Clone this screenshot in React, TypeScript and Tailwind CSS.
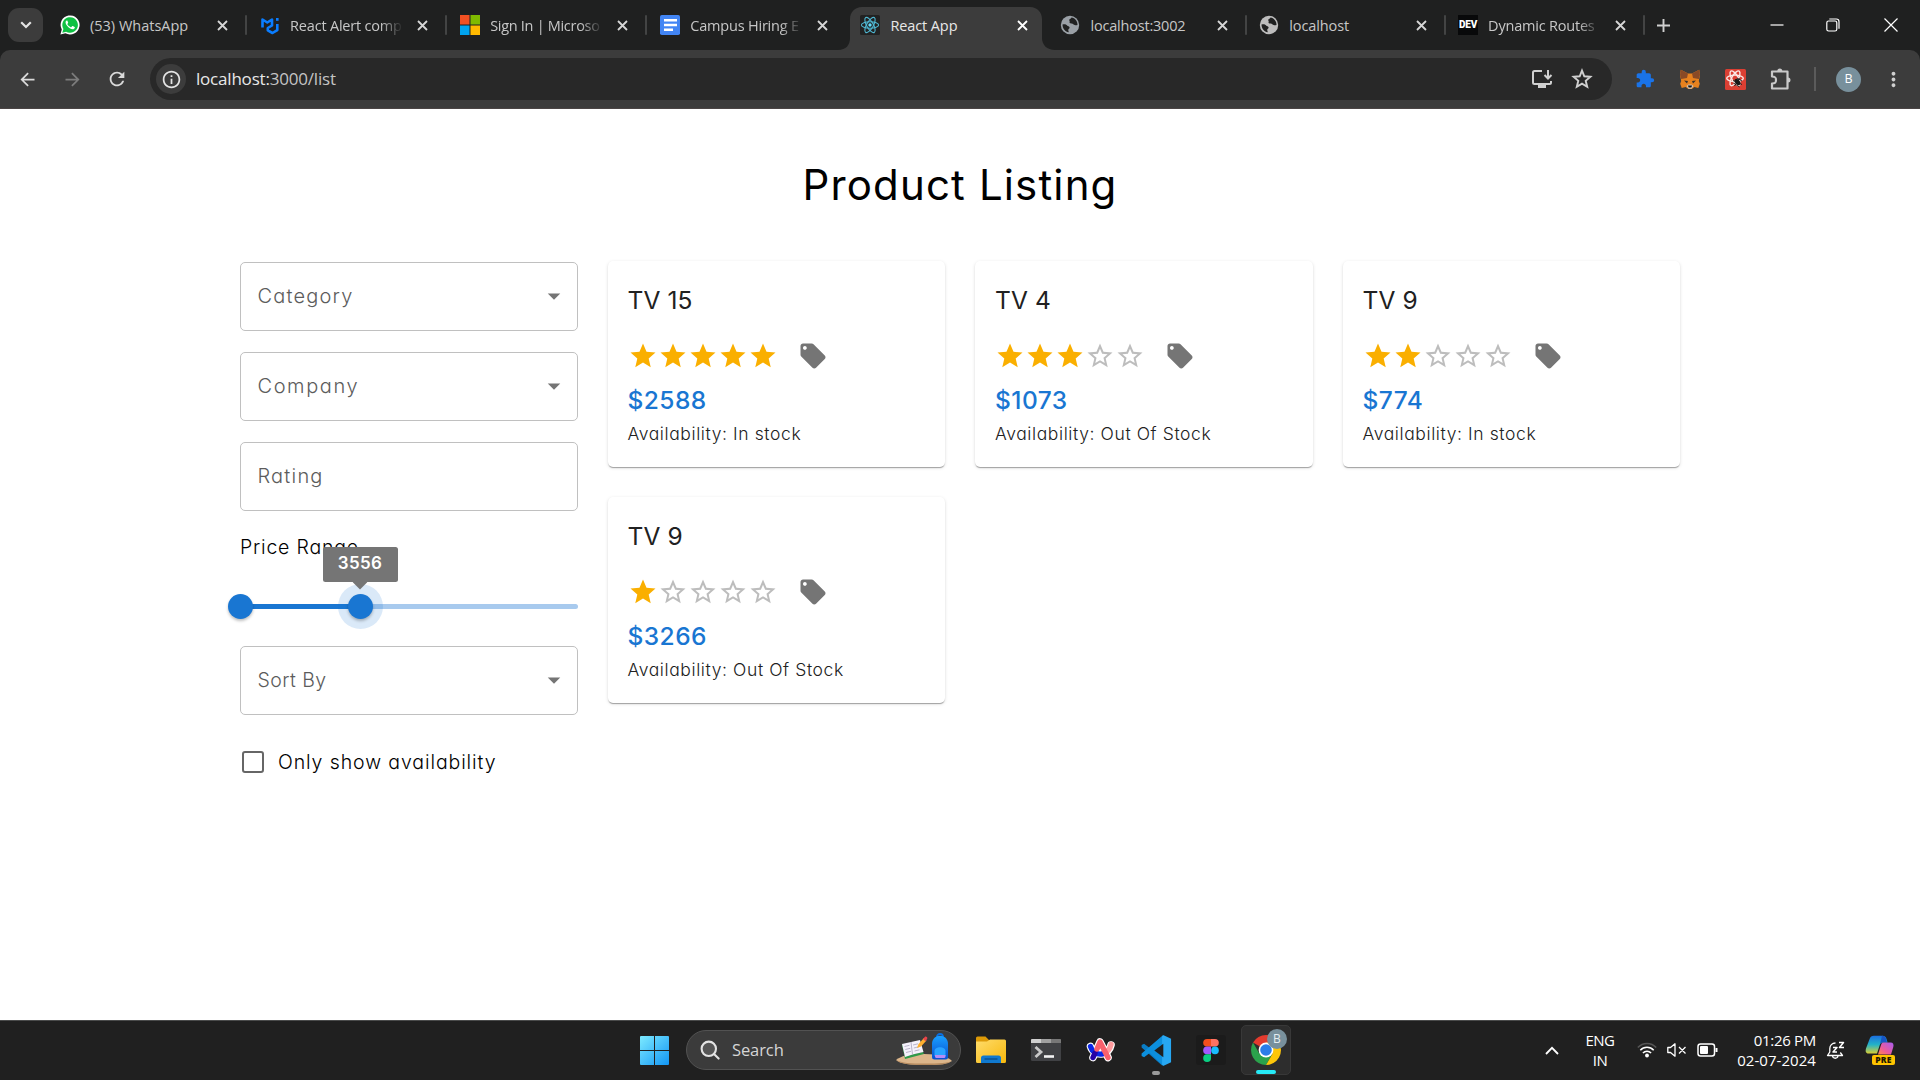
import type { ReactNode } from "react";
import {
  MdArrowBack,
  MdArrowDropDown,
  MdArrowForward,
  MdExtension,
  MdLocalOffer,
  MdMoreVert,
  MdOutlineInfo,
  MdRefresh,
  MdStar,
  MdStarBorder,
} from "react-icons/md";

/* ---------- favicons ---------- */

function WhatsAppIcon() {
  return (
    <svg width="20" height="20" viewBox="0 0 20 20">
      <path d="M.4 19.6 1.8 14.6A9.5 9.5 0 1 1 5.4 18.2Z" fill="#fff" />
      <path d="M2.3 17.7 3.4 14A7.8 7.8 0 1 1 6.1 16.7Z" fill="#0fc143" />
      <path
        d="M7 5.4c-.3 0-.9.2-1.200.9-.5 1.200-.2 2.600 1.300 4.500 1.700 2.100 3.700 3.500 5.600 3.500 1 0 2-.7 2.100-1.500.1-.5.1-.7-.2-.9l-1.800-.9c-.3-.1-.5 0-.7.2l-.7.9c-.2.200-.4.200-.7.1-1.500-.7-2.500-1.600-3.300-2.900-.1-.2-.1-.4.1-.6l.6-.8c.1-.2.1-.3 0-.5l-.8-1.800c-.1-.2-.2-.2-.3-.2Z"
        fill="#fff"
      />
    </svg>
  );
}

function MuiIcon() {
  return (
    <svg width="20" height="20" viewBox="0 0 20 20" fill="none" stroke="#0a7dff" strokeWidth="2.600" strokeLinejoin="round">
      <path d="M2.500 12.500V4.500L7.300 7.500 12 4.500v6l-4.200 2.500v2.300l4.700 2.700 4.800-2.900V9" />
      <path d="M17.300 3v2.800" />
    </svg>
  );
}

function MicrosoftIcon() {
  return (
    <svg width="20" height="20" viewBox="0 0 20 20">
      <rect width="9.500" height="9.500" fill="#f25022" />
      <rect x="10.500" width="9.500" height="9.500" fill="#7fba00" />
      <rect y="10.500" width="9.500" height="9.500" fill="#00a4ef" />
      <rect x="10.500" y="10.500" width="9.500" height="9.500" fill="#ffb900" />
    </svg>
  );
}

function DocsIcon() {
  return (
    <svg width="20" height="20" viewBox="0 0 20 20">
      <rect width="20" height="20" rx="1.800" fill="#4285f4" />
      <path d="M4 5.200h13M4 10h13M4 14.800h9" stroke="#fff" strokeWidth="2.400" />
    </svg>
  );
}

function ReactIcon() {
  return (
    <svg width="20" height="20" viewBox="0 0 20 20">
      <rect width="20" height="20" rx="1.500" fill="#222" />
      <g fill="none" stroke="#4fb8d3" strokeWidth="1.100">
        <ellipse cx="10" cy="10" rx="8.600" ry="3.300" />
        <ellipse cx="10" cy="10" rx="8.600" ry="3.300" transform="rotate(60 10 10)" />
        <ellipse cx="10" cy="10" rx="8.600" ry="3.300" transform="rotate(120 10 10)" />
      </g>
      <circle cx="10" cy="10" r="1.700" fill="#61dafb" />
    </svg>
  );
}

function GlobeIcon({ color }: { color: string }) {
  return (
    <svg width="20" height="20" viewBox="0 0 20 20">
      <circle cx="10" cy="10" r="9.200" fill={color} />
      <path
        d="M2.500 9.500c2.800-.6 4 .2 4.600 1.100.7 1 2.300.6 2.500 1.800.3 1.300-1.600 1.400-1.400 2.700l.6 2.200c-3.500-.6-6.200-3.600-6.300-7.800ZM11.500 2.600c-.3 1.500-1.900 1.300-2.300 2.200-.3.900.9 1.300.4 2.300-.4.800.6 1.500 1.700 1.400 1.500-.2 2 .7 2.700 1.300 1 .8 2.400.4 3.500.1.100-3.700-2.600-6.800-6-7.300Z"
        fill="#202121"
      />
    </svg>
  );
}

function DevIcon() {
  return (
    <div className="flex h-5 w-5 items-center justify-center bg-[#08090a] font-['Roboto',sans-serif] text-[10px] leading-none font-black tracking-[-0.2px] text-white">
      DEV
    </div>
  );
}

function CloseGlyph() {
  return (
    <svg width="11" height="11" viewBox="0 0 11 11" stroke="currentColor" strokeWidth="1.800">
      <path d="M1 1l9 9M10 1l-9 9" />
    </svg>
  );
}

/* ---------- browser chrome ---------- */

type Tab = { icon: ReactNode; label: string; fade?: boolean; active?: boolean; divider?: boolean; narrow?: boolean; text: string };

const tabs: Tab[] = [
  { icon: <WhatsAppIcon />, label: "(53) WhatsApp", divider: true, text: "tracking-[0px]" },
  { icon: <MuiIcon />, label: "React Alert comp", fade: true, divider: true, text: "tracking-[-0.200px]" },
  { icon: <MicrosoftIcon />, label: "Sign In | Microso", fade: true, divider: true, text: "tracking-[-0.300px]" },
  { icon: <DocsIcon />, label: "Campus Hiring E", fade: true, text: "tracking-[-0.200px]" },
  { icon: <ReactIcon />, label: "React App", active: true, text: "tracking-[-0.100px]" },
  { icon: <GlobeIcon color="#9aa0a6" />, label: "localhost:3002", divider: true, narrow: true, text: "tracking-[-0.200px]" },
  { icon: <GlobeIcon color="#bdbdbd" />, label: "localhost", divider: true, narrow: true, text: "tracking-[-0.100px]" },
  { icon: <DevIcon />, label: "Dynamic Routes", fade: true, divider: true, narrow: true, text: "tracking-[-0.200px]" },
];

function BrowserTab({ tab }: { tab: Tab }) {
  return (
    <div className={"relative h-[50px] shrink-0 " + (tab.narrow ? "w-[198.800px]" : "w-[200.100px]")}>
      {tab.active && (
        <svg className="absolute top-[7px] -left-3 text-[#3c3c3c]" width="217" height="43" viewBox="0 0 217 43" fill="currentColor">
          <path d="M0 43c8 0 12-5 12-12V12C12 5 17 0 24 0h168c7 0 12 5 12 12v19c0 7 5 12 13 12Z" />
        </svg>
      )}
      <div className="relative flex h-full items-center pl-2.5">
        <div className="flex h-5 w-5 shrink-0 items-center justify-center">{tab.icon}</div>
        <div
          className={
            "mt-px ml-2.5 w-[113px] text-[14.500px] whitespace-nowrap " +
            tab.text +
            (tab.active ? " text-[#e8e8e8] " : " text-[#c7c7c7] ") +
            (tab.fade ? "[mask-image:linear-gradient(to_right,black_80%,transparent_100%)]" : "")
          }
        >
          {tab.label}
        </div>
        <div className={"ml-[13.500px] flex items-center " + (tab.active ? "text-white" : "text-[#d6d6d6]")}>
          <CloseGlyph />
        </div>
        {tab.divider && <div className="ml-[17px] h-5 w-[2px] rounded-full bg-[#434444]" />}
      </div>
    </div>
  );
}

function TabStrip() {
  return (
    <div className="flex h-[50px] items-center bg-[#1f2020]">
      <div className="ml-2 flex h-[34px] w-[35px] shrink-0 items-center justify-center rounded-[11px] bg-[#3c3c3c]">
        <svg width="12" height="8" viewBox="0 0 12 8" fill="none" stroke="#e3e3e3" strokeWidth="2.200">
          <path d="M1.200 1.200 6 6l4.800-4.800" />
        </svg>
      </div>
      <div className="ml-[7px] flex">
        {tabs.map((tab) => (
          <BrowserTab key={tab.label} tab={tab} />
        ))}
      </div>
      <svg className="ml-[10px] shrink-0" width="13" height="13" viewBox="0 0 13 13" stroke="#d0d0d0" strokeWidth="1.900">
        <path d="M6.500 0v13M0 6.500h13" />
      </svg>
      <div className="ml-auto flex items-center text-white">
        <svg width="14" height="14" viewBox="0 0 14 14" stroke="currentColor" strokeWidth="1.200">
          <path d="M.5 7h13" />
        </svg>
        <svg className="ml-[42px]" width="14" height="14" viewBox="0 0 14 14" fill="none" stroke="currentColor" strokeWidth="1.200">
          <rect x=".8" y="3" width="10" height="10" rx="1.800" />
          <path d="M3.300 1h7a2.700 2.700 0 0 1 2.700 2.700v7" />
        </svg>
        <svg className="mr-[22px] ml-[44px]" width="14" height="14" viewBox="0 0 14 14" stroke="currentColor" strokeWidth="1.200">
          <path d="M.5.5l13 13M13.500.5l-13 13" />
        </svg>
      </div>
    </div>
  );
}

function FoxIcon() {
  return (
    <svg width="20" height="20" viewBox="0 0 20 20">
      <path d="M.8.8 8 4.500h4L19.200.8 20 6l-1.200 6 1 2.800-1.500 4.200-4-1-2.500 2H8.200l-2.500-2-4 1L.2 14.800l1-2.800L0 6Z" fill="#e8821e" />
      <path d="M.8.8 8 4.500 7 9l-5.800 1L0 6ZM19.200.8 12 4.500l1 4.500 5.800 1L20 6Z" fill="#8a4a26" />
      <path d="M4 11.500l4 .5-1 2.500ZM16 11.500l-4 .5 1 2.500Z" fill="#3b3029" />
      <path d="M6.500 17l2-1.500h3l2 1.500-2 2.800h-3Z" fill="#cfc4ba" />
      <path d="M8 16.500h4l-.6 2H8.600Z" fill="#161616" />
    </svg>
  );
}

function ReactDevIcon() {
  return (
    <svg width="21" height="21" viewBox="0 0 21 21">
      <rect width="21" height="21" rx="1.500" fill="#db3f33" />
      <g fill="none" stroke="#fbe7e5" strokeWidth="1.400">
        <ellipse cx="10" cy="9.300" rx="8.300" ry="3.200" />
        <ellipse cx="10" cy="9.300" rx="8.300" ry="3.200" transform="rotate(60 10 9.300)" />
        <ellipse cx="10" cy="9.300" rx="8.300" ry="3.200" transform="rotate(120 10 9.300)" />
      </g>
      <ellipse cx="12.500" cy="13" rx="2.300" ry="3.600" transform="rotate(-40 12.500 13)" fill="#171717" />
      <path d="M8 11.500l9 4M9.500 17l5-8M8.500 14l6 4M12 9l5 3" stroke="#171717" strokeWidth=".9" />
    </svg>
  );
}

function ExtensionsIcon() {
  return (
    <svg width="22" height="24" viewBox="0 0 22 24" fill="none" stroke="#c9c9c9" strokeWidth="2.200" strokeLinejoin="round">
      <path d="M2 4.500h15.500v17H2v-5c3.500 0 4-1 4-3.500S5.500 9.500 2 9.500Z" />
      <path d="M7.300 4a2.500 2.500 0 0 1 5 0ZM18 10.500a2.500 2.500 0 0 1 0 5Z" fill="#c9c9c9" stroke="none" />
    </svg>
  );
}

function Toolbar() {
  return (
    <div className="bg-[#1f2020]">
      <div className="flex h-[59px] items-center rounded-t-[10px] border-b border-[#4b4545] bg-[#3c3c3c]">
        <MdArrowBack className="ml-[17px] text-[#dadada]" size={21} />
        <MdArrowForward className="ml-6 text-[#7c7c7c]" size={21} />
        <MdRefresh className="ml-[23px] text-[#dadada]" size={22} />
        <div className="ml-[22px] flex h-[42px] w-[1462px] items-center rounded-full bg-[#282828] pl-[6px]">
          <div className="flex h-[30px] w-[30px] items-center justify-center rounded-full bg-[#3c3c3c] text-[#e3e3e3]">
            <MdOutlineInfo size={21} />
          </div>
          <div className="ml-[10px] text-[17px] tracking-[-0.200px] text-[#e8e8e8]">
            localhost:<span className="text-[#c4c4c4]">3000/list</span>
          </div>
          <div className="ml-auto flex items-center gap-[18px] pr-[19px] text-[#d0d0d0]">
            <svg width="22" height="20" viewBox="0 0 22 20" fill="none" stroke="currentColor" strokeWidth="2">
              <path d="M11 2H3.500A1.500 1.500 0 0 0 2 3.500v10A1.500 1.500 0 0 0 3.500 15h15a1.500 1.500 0 0 0 1.500-1.500V12M17 1v8M13.500 6l3.500 3.500L20.500 6" />
              <path d="M7 17.500h8" strokeWidth="3" />
            </svg>
            <svg width="22" height="22" viewBox="0 0 22 22" fill="none" stroke="currentColor" strokeWidth="1.900">
              <path d="m11 2.600 2.300 5.700 6.100.5-4.700 4 1.500 6L11 15.600 5.800 18.800l1.500-6-4.700-4 6.100-.5Z" />
            </svg>
          </div>
        </div>
        <MdExtension className="ml-[23px] text-[#1a73e8]" size={20} />
        <div className="ml-[25px]">
          <FoxIcon />
        </div>
        <div className="ml-[25px]">
          <ReactDevIcon />
        </div>
        <div className="ml-[24px]">
          <ExtensionsIcon />
        </div>
        <div className="ml-[22px] h-6 w-[2px] bg-[#5b5b5b]" />
        <div className="ml-5 flex h-[25px] w-[25px] items-center justify-center rounded-full bg-[#78909c] text-[12.500px] text-white">B</div>
        <MdMoreVert className="ml-[21px] text-[#d0d0d0]" size={23} />
      </div>
    </div>
  );
}

/* ---------- page ---------- */

function SelectField({ label, arrow = true, text }: { label: string; arrow?: boolean; text: string }) {
  return (
    <div className="flex h-[69px] items-center justify-between rounded-[5px] border border-[#c0c0c0] pr-[7.500px] pl-[16.500px]">
      <span className={"-mt-[2px] leading-[30px] font-light text-[#5c5c5c] " + text}>{label}</span>
      {arrow && <MdArrowDropDown className="-mt-px text-[#757575]" size={30} />}
    </div>
  );
}

function PriceSlider() {
  return (
    <div className="relative mt-[25px] h-[39px]">
      <div className="absolute top-[17px] left-0 h-[5px] w-full rounded-full bg-[#a8caee]" />
      <div className="absolute top-[17px] left-0 h-[5px] w-[120px] bg-[#1976d2]" />
      <div className="absolute top-[7px] -left-[12.500px] h-[25px] w-[25px] rounded-full bg-[#1976d2] shadow-[0_2px_3px_rgba(0,0,0,0.25)]" />
      <div className="absolute -top-[3px] left-[97.500px] h-[45px] w-[45px] rounded-full bg-[#1976d2]/16" />
      <div className="absolute top-[7px] left-[107.500px] h-[25px] w-[25px] rounded-full bg-[#1976d2] shadow-[0_2px_3px_rgba(0,0,0,0.25)]" />
      <div className="absolute -top-[40px] left-[82.500px] flex h-[34.500px] w-[75px] items-center justify-center rounded-[2.500px] bg-[#757575] pb-px text-[17px] leading-none font-semibold tracking-[0.300px] text-white">
        3556
        <svg className="absolute top-full left-1/2 -translate-x-1/2" width="15" height="8" viewBox="0 0 15 8">
          <path d="M0 0h15L7.500 7.500Z" fill="#757575" />
        </svg>
      </div>
    </div>
  );
}

function Filters() {
  return (
    <div className="flex w-[337.500px] shrink-0 flex-col pt-px">
      <div className="flex flex-col gap-[21px]">
        <SelectField label="Category" text="text-[20px] tracking-[1.200px]" />
        <SelectField label="Company" text="text-[20px] tracking-[1.600px]" />
        <SelectField label="Rating" arrow={false} text="text-[20px] tracking-[1.200px]" />
      </div>
      <div className="mt-[21px] h-[30px] text-[19.500px] leading-[30px] font-[350] tracking-[0.800px] text-black">Price Range</div>
      <PriceSlider />
      <div className="mt-5">
        <SelectField label="Sort By" text="text-[19.500px] tracking-[0.450px]" />
      </div>
      <div className="mt-[32px] flex h-[30px] items-center">
        <div className="ml-[1.500px] h-[22.500px] w-[22.500px] rounded-[3px] border-[2.500px] border-[#666]" />
        <span className="ml-[14px] text-[19.500px] leading-[30px] font-[350] tracking-[0.900px] text-black">Only show availability</span>
      </div>
    </div>
  );
}

type Product = { name: string; rating: number; price: string; stock: string };

const products: Product[] = [
  { name: "TV 15", rating: 5, price: "$2588", stock: "In stock" },
  { name: "TV 4", rating: 3, price: "$1073", stock: "Out Of Stock" },
  { name: "TV 9", rating: 2, price: "$774", stock: "In stock" },
  { name: "TV 9", rating: 1, price: "$3266", stock: "Out Of Stock" },
];

function ProductCard({ product }: { product: Product }) {
  return (
    <div className="h-[206px] rounded-[5px] bg-white px-5 pt-5 shadow-[0_2px_1px_-1px_rgba(0,0,0,0.2),0_1px_1px_0_rgba(0,0,0,0.14),0_1px_3.750px_0_rgba(0,0,0,0.12)]">
      <div className="text-[24.500px] leading-[39px] tracking-[0.100px] text-[#212121]">{product.name}</div>
      <div className="mt-4 flex h-10 items-center">
        {[1, 2, 3, 4, 5].map((n) =>
          n <= product.rating ? (
            <MdStar key={n} size={30} className="text-[#faaf00]" />
          ) : (
            <MdStarBorder key={n} size={30} className="text-[#bdbdbd]" />
          ),
        )}
        <MdLocalOffer size={30} className="ml-5 text-[#757575]" />
      </div>
      <div className="mt-[9px] text-[24.500px] leading-[31px] font-medium tracking-[0.450px] text-[#1976d2]">{product.price}</div>
      <div className="mt-[4px] text-[17.500px] leading-[27px] font-light tracking-[0.600px] text-[#212121]">Availability: {product.stock}</div>
    </div>
  );
}

function ProductPage() {
  return (
    <main className="h-[911px] bg-white font-['Inter',sans-serif] [font-feature-settings:'cv11']">
      <h1 className="pt-[49px] text-center text-[42px] leading-[53px] font-[380] tracking-[1.150px] text-black">Product Listing</h1>
      <div className="mx-auto mt-[50px] flex w-[1440px] gap-[30px]">
        <Filters />
        <div className="grid flex-1 grid-cols-3 content-start gap-[30px]">
          {products.map((product, i) => (
            <ProductCard key={i} product={product} />
          ))}
        </div>
      </div>
    </main>
  );
}

/* ---------- taskbar ---------- */

function TaskCell({ children }: { children: ReactNode }) {
  return <div className="relative flex h-[50px] w-[55px] items-center justify-center">{children}</div>;
}

function WindowsIcon() {
  return (
    <svg width="29" height="29" viewBox="0 0 29 29">
      <defs>
        <linearGradient id="win" x1="0" y1="0" x2="29" y2="29" gradientUnits="userSpaceOnUse">
          <stop stopColor="#7deaff" />
          <stop offset="1" stopColor="#1296f5" />
        </linearGradient>
      </defs>
      <path d="M1 0h13v14H0V1a1 1 0 0 1 1-1ZM15 0h13a1 1 0 0 1 1 1v13H15ZM0 15h14v14H1a1 1 0 0 1-1-1ZM15 15h14v13a1 1 0 0 1-1 1H15Z" fill="url(#win)" />
    </svg>
  );
}

function SearchArt() {
  return (
    <svg width="58" height="34" viewBox="0 0 58 34">
      <defs>
        <linearGradient id="bag" x1="0" y1="0" x2="0" y2="1">
          <stop stopColor="#18a0ff" />
          <stop offset="1" stopColor="#0a4fd0" />
        </linearGradient>
      </defs>
      <path d="M1 27c5-4 12-6 28-6s24 3 28 7c-5 3-10 4-26 4S5 31 1 27Z" fill="#dcb68b" />
      <path d="M1 27c6 3 14 3.500 29 3.500S52 30 57 28c-5 3-10 4-26 4S5 31 1 27Z" fill="#b58a5e" />
      <path d="m7 12 3 14 19-5-1-2L10 23 8 11Z" fill="#2f9a4a" />
      <path d="m7 11 9-2 1.500 12.500L10 24ZM16 9l9-2 3.500 12-11 2.500Z" fill="#f4f1fb" />
      <path d="m16 9 1.500 12.500M9.500 13.500l5-1.200M10.300 16.500l5-1.200M11 19.500l5-1.200M18 12l5-1.200M18.800 15l5-1.200M19.500 18l5-1.200" stroke="#a9a3bd" strokeWidth=".8" />
      <path d="m22 15 1.500-4L29 5l2.500 2.500-5.500 6Z" fill="#ffb02e" />
      <path d="m28 6 2-2.300c1-.8 3 .8 2.200 2L30.500 8.300Z" fill="#e8434b" />
      <path d="M42 4c0-4 6-4 6 0" fill="none" stroke="#0a6fe0" strokeWidth="1.800" />
      <path d="M37 11c0-11 16-11 16 0v13a2.500 2.500 0 0 1-2.500 2.500h-11A2.500 2.500 0 0 1 37 24Z" fill="url(#bag)" />
      <path d="M39.500 18c0-5 11-5 11 0v5h-11Z" fill="#28a3ff" />
      <path d="M40 22h10.500v1.500c0 1-1 1.500-2 1.500H42c-1 0-2-.5-2-1.500Z" fill="#b58cf5" />
    </svg>
  );
}

function FolderIcon() {
  return (
    <svg width="30" height="28" viewBox="0 0 30 28">
      <defs>
        <linearGradient id="fold" x1="0" y1="0" x2="1" y2="1">
          <stop stopColor="#ffdc6b" />
          <stop offset="1" stopColor="#f7b80c" />
        </linearGradient>
      </defs>
      <path d="M0 2a1.500 1.500 0 0 1 1.500-1.500h8L13 4h12v6H0Z" fill="#dd9a07" />
      <path d="M0 5.500h11L14 3.500h14.500A1.500 1.500 0 0 1 30 5v20.500a1.500 1.500 0 0 1-1.500 1.500h-27A1.500 1.500 0 0 1 0 25.500Z" fill="url(#fold)" />
      <path d="M5 27v-5a2.500 2.500 0 0 1 2.500-2.500h15A2.500 2.500 0 0 1 25 22v5Z" fill="#1079cf" />
      <path d="M8.500 23h13" stroke="#0a4c88" strokeWidth="1.300" />
    </svg>
  );
}

function TerminalIcon() {
  return (
    <svg width="30" height="22" viewBox="0 0 30 22">
      <rect width="30" height="22" rx="1.200" fill="#404144" />
      <path d="M1 0h9v4H0V1a1 1 0 0 1 1-1Z" fill="#cfcfcf" />
      <path d="M10 0h10v4H10Z" fill="#a0a0a0" />
      <path d="M20 0h9a1 1 0 0 1 1 1v3H20Z" fill="#777" />
      <path d="m4.500 8 5.500 5-5.500 5" fill="none" stroke="#c8c8c8" strokeWidth="2.800" />
      <path d="M13 17.500h10" stroke="#f3f3f3" strokeWidth="2.600" />
    </svg>
  );
}

function ArcIcon() {
  return (
    <svg width="30" height="26" viewBox="0 0 30 26" fill="none" strokeLinecap="round" strokeLinejoin="round">
      <path d="M4.500 9.500c1.500 5 6 8 11 7.500s8.500-4 9.500-9M7 20.500 14 5l8 15.500" stroke="#fff" strokeWidth="7.600" />
      <path d="M25 7.500c-1 4.500-4 8-8.500 9.300" stroke="#ff9a9d" strokeWidth="5.400" />
      <path d="M4.500 9.500c1.500 5 6 8.500 12 7.300" stroke="#0a27e8" strokeWidth="5.400" />
      <path d="M9 16 7 20.500" stroke="#2702a6" strokeWidth="5.400" />
      <path d="M11 12 14 5l8 15.500" stroke="#f9606c" strokeWidth="5.400" />
    </svg>
  );
}

function VSCodeIcon() {
  return (
    <svg width="31" height="31" viewBox="0 0 100 100">
      <path d="M72 1 28 42 10 28 2 32v8l66 58Z" fill="#0a7cc4" />
      <path d="M72 99 28 58 10 72 2 68v-8L70 2Z" fill="#0c8fdd" />
      <path d="M73 1 97 12v76L73 99c-3 0-5-2-5-4V5c0-2 2-4 5-4Z" fill="#27a7f2" />
      <path d="M72 28v44L43 50Z" fill="#202020" />
    </svg>
  );
}

function FigmaIcon() {
  return (
    <div className="flex h-[30px] w-[30px] items-center justify-center rounded-[3px] bg-[#1b1b1b]">
      <svg width="16" height="23" viewBox="0 0 16 23">
        <path d="M4 0h4v7.600H4A3.800 3.800 0 0 1 4 0Z" fill="#f24e1e" />
        <path d="M8 0h4a3.800 3.800 0 0 1 0 7.600H8Z" fill="#ff7262" />
        <path d="M4 7.600h4v7.600H4a3.800 3.800 0 0 1 0-7.600Z" fill="#a259ff" />
        <circle cx="12" cy="11.400" r="3.800" fill="#1abcfe" />
        <path d="M4 15.200h4V19a3.900 3.900 0 1 1-4-3.800Z" fill="#0acf83" />
      </svg>
    </div>
  );
}

function ChromeIcon() {
  return (
    <svg width="30" height="30" viewBox="0 0 30 30">
      <path d="M15 15 2.010 7.500A15 15 0 0 1 27.990 7.500Z" fill="#e33b2e" />
      <path d="M2.010 7.500A15 15 0 0 0 15 30L21.500 18.700 15 15 8.500 18.700Z" fill="#2ba24c" />
      <path d="M27.990 7.500A15 15 0 0 1 15 30l6.500-11.200L15 7.500Z" fill="#fdc60a" />
      <circle cx="15" cy="15" r="7.400" fill="#fff" />
      <circle cx="15" cy="15" r="5.800" fill="#2b7de9" />
    </svg>
  );
}

function CopilotIcon() {
  return (
    <svg width="30" height="30" viewBox="0 0 30 30">
      <defs>
        <linearGradient id="cpa" x1="0" y1="0" x2="0" y2="1">
          <stop stopColor="#1b6fe0" />
          <stop offset=".5" stopColor="#23b3c8" />
          <stop offset="1" stopColor="#d9cf35" />
        </linearGradient>
        <linearGradient id="cpb" x1="1" y1="0" x2="0" y2="1">
          <stop stopColor="#a55cf3" />
          <stop offset=".6" stopColor="#ee5b9b" />
          <stop offset="1" stopColor="#ff8a4a" />
        </linearGradient>
      </defs>
      <path d="M9 .8h8.500c2.500 0 3.500 1.400 4.200 3.600l.9 3H18c-2 0-2.800 1-3.400 3L12 18.500H3.500C.6 18.500.3 16 1 13.500L4.600 4C5.400 1.800 6.500.8 9 .8Z" fill="url(#cpa)" />
      <path d="M17 .8c2.500 0 3.500 1.400 4.200 3.600l.9 3H18c-1.500 0-2.500.6-3 1.600Z" fill="#1756c4" />
      <path d="M18.500 7.500h7c2.700 0 3.500 2 2.800 4.500L26 19.500H13l3-9.500c.5-1.700 1-2.500 2.500-2.500Z" fill="url(#cpb)" />
    </svg>
  );
}

function Taskbar() {
  return (
    <footer className="flex h-[60px] items-center border-t border-[#4a4b4b] bg-[#202020] pb-px text-white">
      <div className="ml-[627px] flex items-center">
        <TaskCell>
          <WindowsIcon />
        </TaskCell>
        <div className="mr-[2.500px] ml-1 flex h-10 w-[275px] items-center rounded-full border border-[#525252] bg-[#3b3b3b] pr-[7px] pl-[13px]">
          <svg width="20" height="20" viewBox="0 0 20 20" fill="none" stroke="#e3e3e3" strokeWidth="2.100" strokeLinecap="round">
            <circle cx="8.800" cy="8.800" r="7.200" fill="#555" />
            <path d="m14 14 4.600 4.600" />
          </svg>
          <span className="ml-[12px] text-[16.500px] tracking-[-0.100px] text-[#d5d5d5]">Search</span>
          <div className="ml-auto">
            <SearchArt />
          </div>
        </div>
        <TaskCell>
          <FolderIcon />
        </TaskCell>
        <TaskCell>
          <TerminalIcon />
        </TaskCell>
        <TaskCell>
          <ArcIcon />
        </TaskCell>
        <TaskCell>
          <VSCodeIcon />
          <div className="absolute bottom-0 left-1/2 h-1 w-2 -translate-x-1/2 rounded-full bg-[#9a9a9a]" />
        </TaskCell>
        <TaskCell>
          <FigmaIcon />
        </TaskCell>
        <div className="relative ml-[2.500px] flex h-[50px] w-[50px] items-center justify-center rounded-[5px] border border-[#383838] bg-[#2d2d2d]">
          <ChromeIcon />
          <div className="absolute top-[3px] left-[25px] flex h-5 w-5 items-center justify-center rounded-full bg-[#78909c] text-[12px] leading-none text-[#e4edf1]">B</div>
          <div className="absolute bottom-0 left-[14px] h-1 w-5 rounded-full bg-[#26eaf7]" />
        </div>
      </div>

      <div className="ml-auto flex items-center text-[15px] leading-[20px]">
        <svg width="14" height="9" viewBox="0 0 14 9" fill="none" stroke="#fff" strokeWidth="1.800">
          <path d="m1 8 6-6.200L13 8" />
        </svg>
        <div className="ml-[26px] w-[30px] text-center tracking-[-0.500px]">
          ENG
          <br />
          IN
        </div>
        <svg className="ml-[22px]" width="20" height="16" viewBox="0 0 20 16" fill="none" strokeWidth="1.500">
          <path d="M.8 5.500a12.500 12.500 0 0 1 18.400 0" stroke="#555" />
          <path d="M3.300 8.300a9 9 0 0 1 13.400 0M5.900 11a5.600 5.600 0 0 1 8.200 0" stroke="#fff" />
          <circle cx="10" cy="13.500" r="1.900" fill="#fff" />
        </svg>
        <svg className="ml-[10px]" width="20" height="14" viewBox="0 0 20 14" fill="none" stroke="#fff" strokeWidth="1.300" strokeLinejoin="round">
          <path d="M.8 4.500h2.700L8 .8v12.400L3.500 9.500H.8ZM12 4l6.500 6.500M18.500 4 12 10.500" />
        </svg>
        <svg className="ml-[10px]" width="21" height="14" viewBox="0 0 21 14" fill="none" stroke="#fff" strokeWidth="1.500">
          <rect x="1" y="1" width="16.500" height="12" rx="2.500" />
          <rect x="3" y="3" width="8" height="8" rx="1" fill="#fff" stroke="none" />
          <path d="M19.500 5v4" strokeWidth="2" />
        </svg>
        <div className="ml-[16px] flex w-[82px] flex-col items-end whitespace-nowrap">
          <span className="tracking-[-0.300px]">01:26 PM</span>
          <span className="tracking-[0.050px]">02-07-2024</span>
        </div>
        <svg className="ml-[10px]" width="19" height="19" viewBox="0 0 19 19" fill="none" stroke="#fff" strokeWidth="1.300" strokeLinejoin="round">
          <path d="M9.500 2C6 2 3.800 4.500 3.800 7.500V11L1.500 14.500h15L14.300 11.500M6.500 15c.5 3 5 3 5.500 0" />
          <path d="M7 6.500h4L7 11h4M13 1.500h4.500L13.500 6.500H18" strokeWidth="1.500" />
        </svg>
        <div className="relative mr-[25px] ml-[20px] h-[30px] w-[30px]">
          <CopilotIcon />
          <div className="absolute top-[20px] left-[7px] flex h-[9.500px] w-[23px] items-center justify-center rounded-[2px] bg-[#ffc400] text-[8.500px] leading-none font-extrabold tracking-[0.300px] text-[#1f1a00]">
            PRE
          </div>
        </div>
      </div>
    </footer>
  );
}

export default function App() {
  return (
    <div className="h-[1080px] w-[1920px] overflow-hidden bg-white font-['Open_Sans','Noto_Sans',sans-serif]">
      <TabStrip />
      <Toolbar />
      <ProductPage />
      <Taskbar />
    </div>
  );
}
